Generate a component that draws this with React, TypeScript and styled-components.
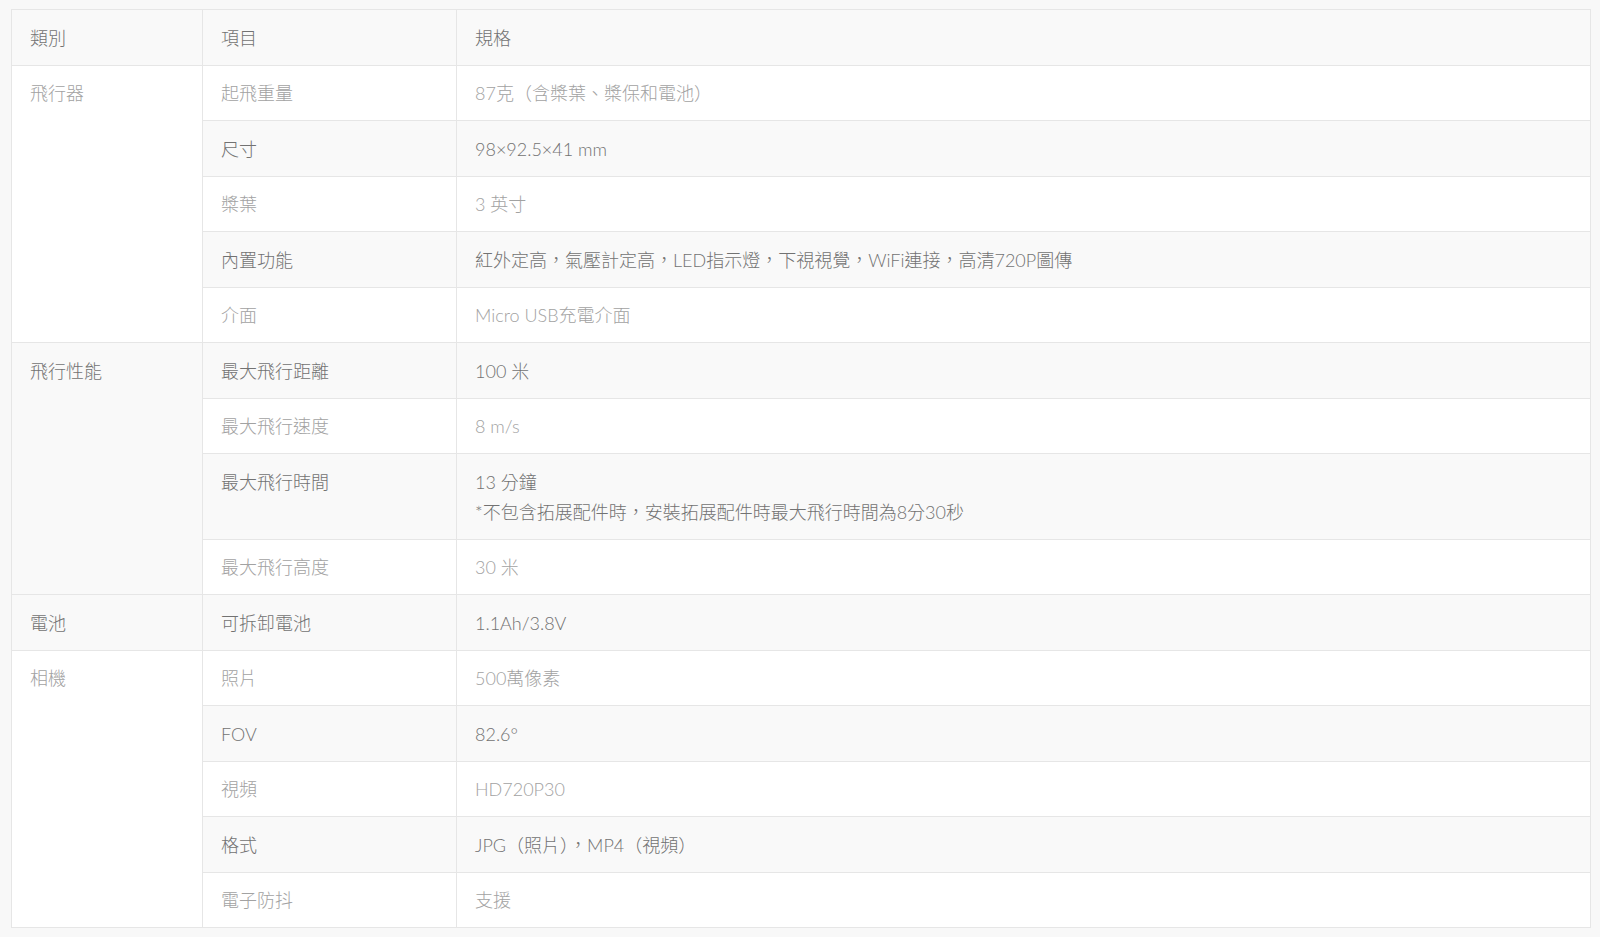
import React from "react";
import styled, { createGlobalStyle } from "styled-components";

const Global = createGlobalStyle`
  html, body {
    margin: 0;
    padding: 0;
    background: #f8f8f8;
  }
  body {
    font-family: "Lato", "Noto Sans CJK TC", sans-serif;
  }
`;

const Page = styled.div`
  padding: 9px 9px 10px 11px;
`;

const Table = styled.table`
  width: 100%;
  border-collapse: collapse;
  table-layout: fixed;
  background: #fff;
  border: 1px solid #e4e4e4;
  font-size: 18px;
  line-height: 30px;
  font-weight: 300;
`;

const Col = styled.col<{ $w?: number }>`
  width: ${(p) => (p.$w ? `${p.$w}px` : "auto")};
`;

const HeadCell = styled.th`
  text-align: left;
  font-weight: 300;
  color: #727272;
  background: #f9f9f9;
  padding: 12.5px 18px 12px 18px;
  border: 1px solid #e6e6e6;
  vertical-align: top;
`;

const Row = styled.tr`
  &:nth-child(even) > td {
    background: #f9f9f9;
    color: #727272;
  }
  &:nth-child(odd) > td {
    background: #fff;
    color: #a2a2a2;
  }
`;

const Cell = styled.td`
  padding: 12.5px 18px 12px 18px;
  border: 1px solid #e6e6e6;
  vertical-align: top;
  white-space: nowrap;
`;

const Line = styled.div``;

type Item = { name: string; value: string[] };
type Group = { category: string; items: Item[] };

const data: Group[] = [
  {
    category: "飛行器",
    items: [
      { name: "起飛重量", value: ["87克（含槳葉、槳保和電池）"] },
      { name: "尺寸", value: ["98×92.5×41 mm"] },
      { name: "槳葉", value: ["3 英寸"] },
      {
        name: "內置功能",
        value: ["紅外定高，氣壓計定高，LED指示燈，下視視覺，WiFi連接，高清720P圖傳"],
      },
      { name: "介面", value: ["Micro USB充電介面"] },
    ],
  },
  {
    category: "飛行性能",
    items: [
      { name: "最大飛行距離", value: ["100 米"] },
      { name: "最大飛行速度", value: ["8 m/s"] },
      {
        name: "最大飛行時間",
        value: ["13 分鐘", "*不包含拓展配件時，安裝拓展配件時最大飛行時間為8分30秒"],
      },
      { name: "最大飛行高度", value: ["30 米"] },
    ],
  },
  {
    category: "電池",
    items: [{ name: "可拆卸電池", value: ["1.1Ah/3.8V"] }],
  },
  {
    category: "相機",
    items: [
      { name: "照片", value: ["500萬像素"] },
      { name: "FOV", value: ["82.6°"] },
      { name: "視頻", value: ["HD720P30"] },
      { name: "格式", value: ["JPG（照片），MP4（視頻）"] },
      { name: "電子防抖", value: ["支援"] },
    ],
  },
];

export default function App() {
  return (
    <Page>
      <Global />
      <Table>
        <colgroup>
          <Col $w={191} />
          <Col $w={254} />
          <Col />
        </colgroup>
        <thead>
          <tr>
            <HeadCell>類別</HeadCell>
            <HeadCell>項目</HeadCell>
            <HeadCell>規格</HeadCell>
          </tr>
        </thead>
        <tbody>
          {data.flatMap((g) =>
            g.items.map((it, i) => (
              <Row key={g.category + it.name}>
                {i === 0 && <Cell rowSpan={g.items.length}>{g.category}</Cell>}
                <Cell>{it.name}</Cell>
                <Cell>
                  {it.value.map((v) => (
                    <Line key={v}>{v}</Line>
                  ))}
                </Cell>
              </Row>
            ))
          )}
        </tbody>
      </Table>
    </Page>
  );
}
